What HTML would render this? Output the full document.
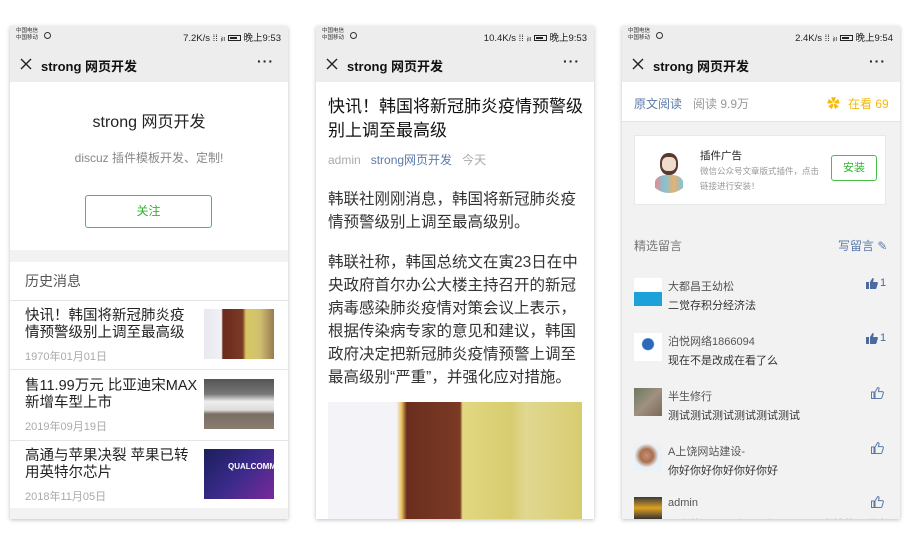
<!DOCTYPE html>
<html><head><meta charset="utf-8">
<style>
*{margin:0;padding:0;box-sizing:border-box}
body{width:910px;height:545px;background:#fff;position:relative;overflow:hidden;font-family:"Liberation Sans","Noto Sans CJK SC",sans-serif;color:#222}
.ph{position:absolute;top:26px;width:278px;height:493px;background:#f2f2f2;box-shadow:0 1px 4px rgba(0,0,0,.25);overflow:hidden}
.sb{position:absolute;left:0;top:0;width:100%;height:21px;background:#ededed;font-size:8px}
.sb .c{position:absolute;left:6px;top:2px;font-size:5.5px;line-height:7px;color:#333}
.sb .c i{position:absolute;left:28px;top:4px;width:7px;height:7px;border:1px solid #333;border-radius:50%}
.sb .r{position:absolute;right:7px;top:4px;font-size:9.5px;color:#222}
.sb .bat{display:inline-block;width:13px;height:6px;border:1px solid #222;vertical-align:0;position:relative}
.sb .bat:after{content:"";position:absolute;left:1px;top:1px;width:7px;height:2px;background:#222}
.nb{position:absolute;left:0;top:21px;width:100%;height:35px;background:#ededed}
.nb svg.x{position:absolute;left:10px;top:11px}
.nb .t{position:absolute;left:31px;top:9px;font-size:13px;font-weight:bold;color:#111}
.nb .d{position:absolute;right:14px;top:6px;font-size:14px;letter-spacing:1px;font-weight:bold}
.a{position:absolute}
.gr{color:#aaa}
.it{font-size:14.5px;line-height:17px;color:#222}
</style></head><body>

<!-- LEFT -->
<div class="ph" style="left:10px">
 <div class="sb"><div class="c">中国电信<br>中国移动<i></i></div><div class="r">7.2K/s ⁞⁞ ᵢₗₗ <span class="bat"></span> 晚上9:53</div></div>
 <div class="nb"><svg class="x" width="12" height="12" viewBox="0 0 12 12"><path d="M1 1L11 11M11 1L1 11" stroke="#222" stroke-width="1.4"/></svg><span class="t">strong 网页开发</span><span class="d">···</span></div>
 <div class="a" style="left:0;top:56px;width:278px;height:168px;background:#fff">
  <div class="a" style="left:0;width:100%;top:26px;text-align:center;font-size:16px;color:#222">strong 网页开发</div>
  <div class="a" style="left:0;width:100%;top:67px;text-align:center;font-size:12px;color:#888">discuz 插件模板开发、定制!</div>
  <div class="a" style="left:75px;top:113px;width:127px;height:33px;border:1px solid #46c046;border-radius:3px;text-align:center;line-height:31px;color:#2fb32f;font-size:12px">关注</div>
 </div>
 <div class="a" style="left:0;top:236px;width:278px;height:246px;background:#fff">
  <div class="a" style="left:15px;top:9px;font-size:14px;color:#555">历史消息</div>
  <div class="a" style="left:0;top:38px;width:100%;border-top:1px solid #e5e5e5"></div>
  <div class="a it" style="left:15px;top:46px;width:172px">快讯！韩国将新冠肺炎疫情预警级别上调至最高级</div>
  <div class="a gr" style="left:15px;top:86px;font-size:11px">1970年01月01日</div>
  <div class="a" style="left:194px;top:47px;width:70px;height:50px;background:linear-gradient(90deg,#e8e8f0 0,#f0f0f5 25%,#6b2a1c 27%,#7a3a24 55%,#d9c763 60%,#cfc070 80%,#9a7a50 100%)"></div>
  <div class="a" style="left:0;top:107px;width:100%;border-top:1px solid #e5e5e5"></div>
  <div class="a it" style="left:15px;top:116px;width:176px">售11.99万元 比亚迪宋MAX新增车型上市</div>
  <div class="a gr" style="left:15px;top:156px;font-size:11px">2019年09月19日</div>
  <div class="a" style="left:194px;top:117px;width:70px;height:50px;background:linear-gradient(180deg,#555 0,#777 30%,#eee 45%,#ddd 62%,#7a6e64 70%,#8a7d70 100%)"></div>
  <div class="a" style="left:0;top:178px;width:100%;border-top:1px solid #e5e5e5"></div>
  <div class="a it" style="left:15px;top:186px;width:176px">高通与苹果决裂 苹果已转用英特尔芯片</div>
  <div class="a gr" style="left:15px;top:226px;font-size:11px">2018年11月05日</div>
  <div class="a" style="left:194px;top:187px;width:70px;height:50px;background:linear-gradient(135deg,#1a1f5a,#3a2a8a 50%,#7a2a9a);color:#fff;font-size:8px;font-weight:bold;padding-left:24px;line-height:36px">QUALCOMM</div>
 </div>
</div>

<!-- MIDDLE -->
<div class="ph" style="left:316px;background:#fff">
 <div class="sb"><div class="c">中国电信<br>中国移动<i></i></div><div class="r">10.4K/s ⁞⁞ ᵢₗₗ <span class="bat"></span> 晚上9:53</div></div>
 <div class="nb"><svg class="x" width="12" height="12" viewBox="0 0 12 12"><path d="M1 1L11 11M11 1L1 11" stroke="#222" stroke-width="1.4"/></svg><span class="t">strong 网页开发</span><span class="d">···</span></div>
 <div class="a" style="left:12px;top:69px;width:258px;font-size:17px;line-height:24px;color:#111">快讯！韩国将新冠肺炎疫情预警级别上调至最高级</div>
 <div class="a" style="left:12px;top:125px;font-size:12px"><span class="gr">admin</span>&nbsp;&nbsp; <span style="color:#5b7aa8">strong网页开发</span>&nbsp;&nbsp; <span class="gr">今天</span></div>
 <div class="a" style="left:12px;top:162px;width:252px;font-size:15.5px;line-height:23px;color:#333">韩联社刚刚消息，韩国将新冠肺炎疫情预警级别上调至最高级别。</div>
 <div class="a" style="left:12px;top:225px;width:252px;font-size:15.5px;line-height:23px;color:#333">韩联社称，韩国总统文在寅23日在中央政府首尔办公大楼主持召开的新冠病毒感染肺炎疫情对策会议上表示，根据传染病专家的意见和建议，韩国政府决定把新冠肺炎疫情预警上调至最高级别“严重”，并强化应对措施。</div>
 <div class="a" style="left:12px;top:376px;width:254px;height:117px;background:linear-gradient(90deg,#f3f3f8 0,#f3f3f8 27%,#e6c05a 29%,#6b2e1e 31%,#7a3a24 52%,#e2d880 53%,#d8cc70 72%,#e0d890 78%,#d8cc70 100%)"></div>
</div>

<!-- RIGHT -->
<div class="ph" style="left:622px">
 <div class="sb"><div class="c">中国电信<br>中国移动<i></i></div><div class="r">2.4K/s ⁞⁞ ᵢₗₗ <span class="bat"></span> 晚上9:54</div></div>
 <div class="nb"><svg class="x" width="12" height="12" viewBox="0 0 12 12"><path d="M1 1L11 11M11 1L1 11" stroke="#222" stroke-width="1.4"/></svg><span class="t">strong 网页开发</span><span class="d">···</span></div>
 <div class="a" style="left:0;top:56px;width:278px;height:40px;background:#fff;border-bottom:1px solid #e5e5e5">
  <span class="a" style="left:12px;top:13px;font-size:12px;color:#5b7aa8">原文阅读</span>
  <span class="a" style="left:71px;top:13px;font-size:12px;color:#999">阅读 9.9万</span>
  <span class="a" style="left:205px;top:11px;font-size:13px;color:#f5b90a">✿</span>
  <span class="a" style="left:226px;top:13px;font-size:12px;color:#f5b90a">在看 69</span>
 </div>
 <div class="a" style="left:12px;top:109px;width:252px;height:70px;background:#fff;border:1px solid #e8e8e8">
  <div class="a" style="left:12px;top:11px;width:44px;height:46px;border-radius:50%;background:#fff;overflow:hidden">
   <div class="a" style="left:13px;top:6px;width:18px;height:22px;border-radius:45%;background:#5a3a2e"></div>
   <div class="a" style="left:15px;top:10px;width:14px;height:14px;border-radius:40%;background:#f0dccc"></div>
   <div class="a" style="left:8px;top:28px;width:28px;height:18px;border-radius:40% 40% 0 0;background:linear-gradient(90deg,#e88a8a,#7ec4d8,#e8b070,#7ec4d8)"></div>
  </div>
  <div class="a" style="left:65px;top:12px;font-size:10.5px;color:#222">插件广告</div>
  <div class="a" style="left:65px;top:28px;width:124px;font-size:8.5px;line-height:15px;color:#999">微信公众号文章版式插件，点击链接进行安装！</div>
  <div class="a" style="left:196px;top:19px;width:46px;height:26px;border:1px solid #46c046;border-radius:3px;color:#2fb32f;font-size:11px;text-align:center;line-height:24px">安装</div>
 </div>
 <div class="a" style="left:12px;top:211px;font-size:12px;color:#777">精选留言</div>
 <div class="a" style="left:216px;top:211px;font-size:12px;color:#5b7aa8">写留言 ✎</div>

 <div class="a" style="left:12px;top:252px;width:28px;height:28px;background:linear-gradient(180deg,#fff 0,#fff 50%,#1ea0d8 50%)"></div>
 <div class="a" style="left:46px;top:252px;font-size:11px;color:#555">大都昌王幼松</div>
 <div class="a" style="left:46px;top:271px;font-size:11px;color:#333">二觉存积分经济法</div>
 <svg class="a" style="left:244px;top:252px" width="12" height="11" viewBox="0 0 12 11"><path d="M0 4H3V11H0ZM4 4L6.5 0C7.5 0 8 1 7.6 2L7 4H11C11.8 4 12 5 11.8 5.6L10.4 10.2C10.2 10.8 9.8 11 9.2 11H4Z" fill="#4a6aa0"/></svg>
 <span class="a" style="left:258px;top:251px;font-size:11px;color:#4a6aa0">1</span>

 <div class="a" style="left:12px;top:307px;width:28px;height:28px;background:radial-gradient(circle at 50% 40%,#2a6ab8 0,#2a6ab8 25%,#fff 30%)"></div>
 <div class="a" style="left:46px;top:307px;font-size:11px;color:#555">泊悦网络1866094</div>
 <div class="a" style="left:46px;top:326px;font-size:11px;color:#333">现在不是改成在看了么</div>
 <svg class="a" style="left:244px;top:307px" width="12" height="11" viewBox="0 0 12 11"><path d="M0 4H3V11H0ZM4 4L6.5 0C7.5 0 8 1 7.6 2L7 4H11C11.8 4 12 5 11.8 5.6L10.4 10.2C10.2 10.8 9.8 11 9.2 11H4Z" fill="#4a6aa0"/></svg>
 <span class="a" style="left:258px;top:306px;font-size:11px;color:#4a6aa0">1</span>

 <div class="a" style="left:12px;top:362px;width:28px;height:28px;background:linear-gradient(135deg,#6a7a60,#a09080 50%,#7a6a5a)"></div>
 <div class="a" style="left:46px;top:362px;font-size:11px;color:#555">半生修行</div>
 <div class="a" style="left:46px;top:381px;font-size:11px;color:#333">测试测试测试测试测试测试</div>
 <svg class="a" style="left:249px;top:361px" width="13" height="12" viewBox="0 0 13 12"><path d="M0.5 5H3V11.5H0.5ZM4 5L6.8 0.5C7.8 0.5 8.3 1.4 8 2.3L7.4 4.6H11.4C12.2 4.6 12.6 5.4 12.3 6.1L10.9 10.8C10.7 11.3 10.3 11.5 9.8 11.5H4Z" fill="none" stroke="#5b7aa8" stroke-width="1"/></svg>

 <div class="a" style="left:12px;top:417px;width:28px;height:28px;background:radial-gradient(circle at 45% 45%,#c89070 0,#a87050 30%,#eaf2f8 55%)"></div>
 <div class="a" style="left:46px;top:417px;font-size:11px;color:#555">A上饶网站建设-</div>
 <div class="a" style="left:46px;top:436px;font-size:11px;color:#333">你好你好你好你好你好</div>
 <svg class="a" style="left:249px;top:416px" width="13" height="12" viewBox="0 0 13 12"><path d="M0.5 5H3V11.5H0.5ZM4 5L6.8 0.5C7.8 0.5 8.3 1.4 8 2.3L7.4 4.6H11.4C12.2 4.6 12.6 5.4 12.3 6.1L10.9 10.8C10.7 11.3 10.3 11.5 9.8 11.5H4Z" fill="none" stroke="#5b7aa8" stroke-width="1"/></svg>

 <div class="a" style="left:12px;top:471px;width:28px;height:22px;background:linear-gradient(180deg,#3a3a3a,#e0a020 50%,#333)"></div>
 <div class="a" style="left:46px;top:471px;font-size:11px;color:#555">admin</div>
 <div class="a" style="left:46px;top:490px;font-size:11px;color:#333">现在的设置，会员回复是否需要审核的，游客</div>
 <svg class="a" style="left:249px;top:470px" width="13" height="12" viewBox="0 0 13 12"><path d="M0.5 5H3V11.5H0.5ZM4 5L6.8 0.5C7.8 0.5 8.3 1.4 8 2.3L7.4 4.6H11.4C12.2 4.6 12.6 5.4 12.3 6.1L10.9 10.8C10.7 11.3 10.3 11.5 9.8 11.5H4Z" fill="none" stroke="#5b7aa8" stroke-width="1"/></svg>
</div>
</body></html>
